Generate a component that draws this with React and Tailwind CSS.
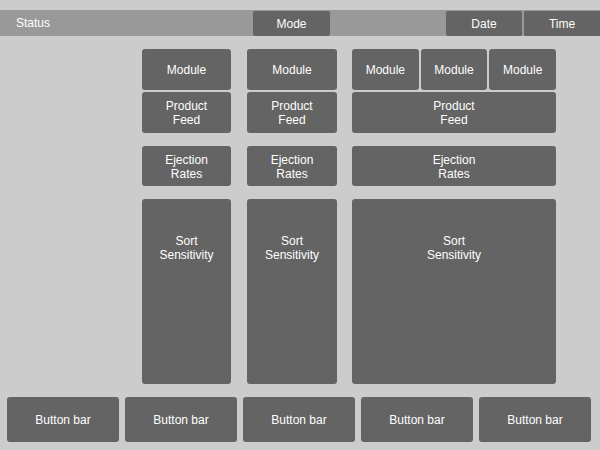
import React from "react";

const box = "bg-[#646464] text-white rounded-[3px] flex items-center justify-center text-center text-[12px] leading-[14px]";

function Column({ width, modules }) {
  return (
    <div className={`flex flex-col ${width}`}>
      <div className="flex gap-[2px] h-[41px]">
        {Array.from({ length: modules }).map((_, i) => (
          <div key={i} className={`${box} flex-1`}>Module</div>
        ))}
      </div>
      <div className={`${box} h-[41px] mt-[2px]`}>Product<br />Feed</div>
      <div className={`${box} h-[40px] mt-[13px] pt-[1px]`}>Ejection<br />Rates</div>
      <div className="bg-[#646464] text-white rounded-[3px] text-center text-[12px] leading-[14px] flex-1 mt-[13px] pt-[35px]">
        Sort<br />Sensitivity
      </div>
    </div>
  );
}

export default function App() {
  return (
    <div
      className="w-[600px] h-[450px] bg-[#cccccc] flex flex-col overflow-hidden"
      style={{ fontFamily: '"Liberation Sans", Arial, sans-serif' }}
    >
      <div className="mt-[10px] h-[26px] bg-[#999999] flex items-stretch text-white text-[12px]">
        <div className="w-[253px] pl-[16px] flex items-center">Status</div>
        <div className="w-[77px] mt-[1px] bg-[#646464] rounded-[2px] flex items-center justify-center">Mode</div>
        <div className="flex-1" />
        <div className="w-[76px] mt-[1px] bg-[#646464] rounded-[2px] flex items-center justify-center">Date</div>
        <div className="w-[76px] mt-[1px] ml-[2px] bg-[#646464] rounded-l-[2px] flex items-center justify-center">Time</div>
      </div>
      <div className="mt-[13px] h-[335px] flex pl-[142px]">
        <Column width="w-[89px]" modules={1} />
        <div className="ml-[16px] flex">
          <Column width="w-[90px]" modules={1} />
        </div>
        <div className="ml-[15px] flex">
          <Column width="w-[204px]" modules={3} />
        </div>
      </div>
      <div className="mt-[13px] h-[45px] flex gap-[6px] pl-[7px] pr-[9px]">
        {Array.from({ length: 5 }).map((_, i) => (
          <div key={i} className={`${box} flex-1`}>Button bar</div>
        ))}
      </div>
    </div>
  );
}
